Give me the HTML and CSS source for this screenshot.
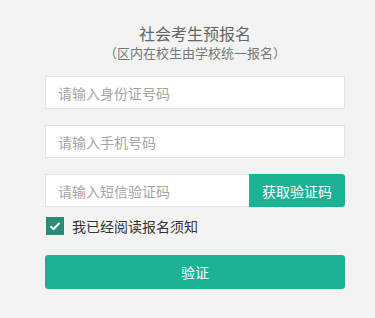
FILE: index.html
```html
<!DOCTYPE html>
<html lang="zh-CN">
<head>
<meta charset="utf-8">
<title>社会考生预报名</title>
<link rel="stylesheet" href="styles.css">
</head>
<body>
<div class="page">
  <div class="head">
    <div class="title">社会考生预报名</div>
    <div class="subtitle">（区内在校生由学校统一报名）</div>
  </div>
  <form class="form">
    <input class="field" type="text" placeholder="请输入身份证号码">
    <input class="field" type="text" placeholder="请输入手机号码">
    <div class="code-row">
      <input class="field code" type="text" placeholder="请输入短信验证码">
      <button type="button" class="code-btn">获取验证码</button>
    </div>
    <label class="agree">
      <span class="box"><svg width="12" height="10" viewBox="0 0 12 10"><path d="M1.5 5.2 L4.5 8 L10.5 2" fill="none" stroke="#fff" stroke-width="2"/></svg></span>
      <span class="agree-text">我已经阅读报名须知</span>
    </label>
    <button type="button" class="submit">验证</button>
  </form>
</div>
</body>
</html>
```
FILE: styles.css
```css
html, body {
  margin: 0;
  padding: 0;
  background: #f3f3f3;
}
body {
  font-family: "Noto Sans CJK SC", "Noto Sans", sans-serif;
}
.page {
  padding: 23px 30px 0 45px;
  width: 300px;
}
.head {
  text-align: center;
}
.title {
  font-size: 16px;
  line-height: 20px;
  color: #666;
}
.subtitle {
  font-size: 13px;
  line-height: 18px;
  margin-top: 1px;
  color: #777;
}
.form {
  margin-top: 14px;
  display: flex;
  flex-direction: column;
}
.field {
  box-sizing: border-box;
  height: 33px;
  width: 100%;
  border: 1px solid #e3e3e3;
  background: #fff;
  padding: 0 12px;
  font-family: inherit;
  font-size: 14px;
  color: #333;
  outline: none;
  margin: 0 0 16px 0;
  border-radius: 0;
}
.field::placeholder {
  color: #a5a5a5;
}
.code-row {
  display: flex;
  height: 33px;
}
.field.code {
  flex: 1;
  margin: 0;
  border-right: none;
}
.code-btn {
  width: 96px;
  height: 33px;
  border: none;
  background: #1bb394;
  color: #fff;
  font-family: inherit;
  font-size: 14px;
  padding: 0;
  border-radius: 0 3px 3px 0;
}
.agree {
  display: flex;
  align-items: center;
  margin-top: 10px;
  height: 18px;
}
.box {
  width: 18px;
  height: 18px;
  background: #2b8b76;
  display: flex;
  align-items: center;
  justify-content: center;
  margin-left: 1px;
}
.agree-text {
  margin-left: 8px;
  font-size: 14px;
  color: #333;
}
.submit {
  margin-top: 20px;
  height: 34px;
  width: 100%;
  border: none;
  border-radius: 3px;
  background: #1bb394;
  color: #fff;
  font-family: inherit;
  font-size: 14px;
}
```
